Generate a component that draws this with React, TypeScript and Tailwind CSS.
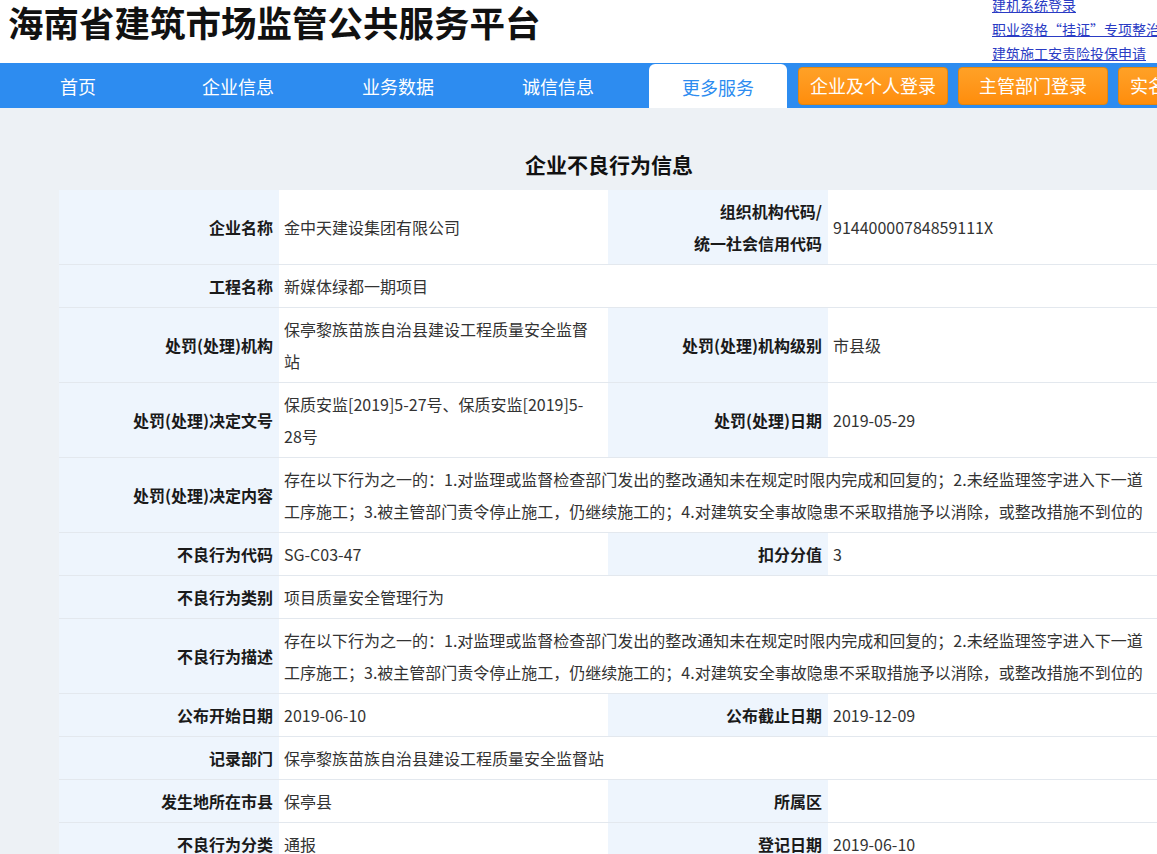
import React from 'react';

type Cell = { label: string; value?: React.ReactNode };
type Row = Cell[];

const navItems = ['首页', '企业信息', '业务数据', '诚信信息'];
const loginButtons = ['企业及个人登录', '主管部门登录', '实名制管理系统'];
const topLinks = ['建机系统登录', '职业资格“挂证”专项整治', '建筑施工安责险投保申请'];

const penaltyText =
  '存在以下行为之一的：1.对监理或监督检查部门发出的整改通知未在规定时限内完成和回复的；2.未经监理签字进入下一道工序施工；3.被主管部门责令停止施工，仍继续施工的；4.对建筑安全事故隐患不采取措施予以消除，或整改措施不到位的';

const rows: Row[] = [
  [
    { label: '企业名称', value: '金中天建设集团有限公司' },
    {
      label: '组织机构代码/\n统一社会信用代码',
      value: '91440000784859111X',
    },
  ],
  [{ label: '工程名称', value: '新媒体绿都一期项目' }],
  [
    { label: '处罚(处理)机构', value: '保亭黎族苗族自治县建设工程质量安全监督站' },
    { label: '处罚(处理)机构级别', value: '市县级' },
  ],
  [
    { label: '处罚(处理)决定文号', value: '保质安监[2019]5-27号、保质安监[2019]5-28号' },
    { label: '处罚(处理)日期', value: '2019-05-29' },
  ],
  [{ label: '处罚(处理)决定内容', value: penaltyText }],
  [
    { label: '不良行为代码', value: 'SG-C03-47' },
    { label: '扣分分值', value: '3' },
  ],
  [{ label: '不良行为类别', value: '项目质量安全管理行为' }],
  [{ label: '不良行为描述', value: penaltyText }],
  [
    { label: '公布开始日期', value: '2019-06-10' },
    { label: '公布截止日期', value: '2019-12-09' },
  ],
  [{ label: '记录部门', value: '保亭黎族苗族自治县建设工程质量安全监督站' }],
  [
    { label: '发生地所在市县', value: '保亭县' },
    { label: '所属区', value: '' },
  ],
  [
    { label: '不良行为分类', value: '通报' },
    { label: '登记日期', value: '2019-06-10' },
  ],
];

const labelCls =
  'bg-[#eef5fd] text-right font-bold text-[16px] leading-[32px] text-[#1a1a1a] pr-[6px] pl-[6px] py-[5px] border-b border-[#e3e8ee] align-middle whitespace-pre-line';
const valueCls =
  'bg-white text-left text-[16px] leading-[32px] text-[#333] pl-[5px] pr-[10px] py-[5px] border-b border-[#e3e8ee] align-middle';

export default function App() {
  return (
    <div className="w-[1157px] h-[854px] overflow-hidden bg-[#edf1f5] font-['Noto_Sans_CJK_SC',sans-serif]">
      <div className="w-[1280px]">
        {/* Header */}
        <div className="h-[63px] bg-white flex justify-between relative">
          <h1 className="pl-[8px] text-[35.5px] leading-[44px] font-bold text-[#111]">
            海南省建筑市场监管公共服务平台
          </h1>
          <div className="absolute left-[992px] -top-[7px] flex flex-col">
            {topLinks.map((l) => (
              <a key={l} className="text-[14px] leading-[24px] text-[#2a3bc4] underline whitespace-nowrap">
                {l}
              </a>
            ))}
          </div>
        </div>

        {/* Nav */}
        <div className="h-[45px] bg-[#2d8cf0] flex items-center pl-[9px]">
          <div className="flex items-center gap-[22px] h-full">
            {navItems.map((n) => (
              <div key={n} className="w-[138px] text-center text-white text-[18px] pt-[2px]">
                {n}
              </div>
            ))}
            <div className="w-[138px] h-[44px] self-end bg-white rounded-t-[6px] flex items-center justify-center text-[#2d8cf0] text-[18px] pt-[2px]">
              更多服务
            </div>
          </div>
          <div className="flex items-center gap-[10px] ml-[11px]">
            {loginButtons.map((b) => (
              <div
                key={b}
                className="w-[150px] h-[38px] rounded-[4px] border border-[#e2860f] bg-gradient-to-b from-[#ffa126] to-[#ff8d0a] flex items-center justify-center text-white text-[18px] whitespace-nowrap"
              >
                {b}
              </div>
            ))}
          </div>
        </div>

        {/* Content */}
        <div className="pl-[59px] pt-[40px]">
          <div className="w-[1100px]">
            <h2 className="text-center text-[21px] leading-[32px] font-bold text-[#111] mb-[10px]">
              企业不良行为信息
            </h2>
            <table className="w-[1100px] table-fixed border-collapse">
              <colgroup>
                <col className="w-[220px]" />
                <col className="w-[329px]" />
                <col className="w-[220px]" />
                <col className="w-[331px]" />
              </colgroup>
              <tbody>
                {rows.map((row, i) => (
                  <tr key={i}>
                    {row.length === 1 ? (
                      <>
                        <td className={labelCls}>{row[0].label}</td>
                        <td className={valueCls} colSpan={3}>
                          {row[0].value}
                        </td>
                      </>
                    ) : (
                      row.map((c) => (
                        <React.Fragment key={c.label}>
                          <td className={labelCls}>{c.label}</td>
                          <td className={valueCls}>{c.value}</td>
                        </React.Fragment>
                      ))
                    )}
                  </tr>
                ))}
              </tbody>
            </table>
          </div>
        </div>
      </div>
    </div>
  );
}
